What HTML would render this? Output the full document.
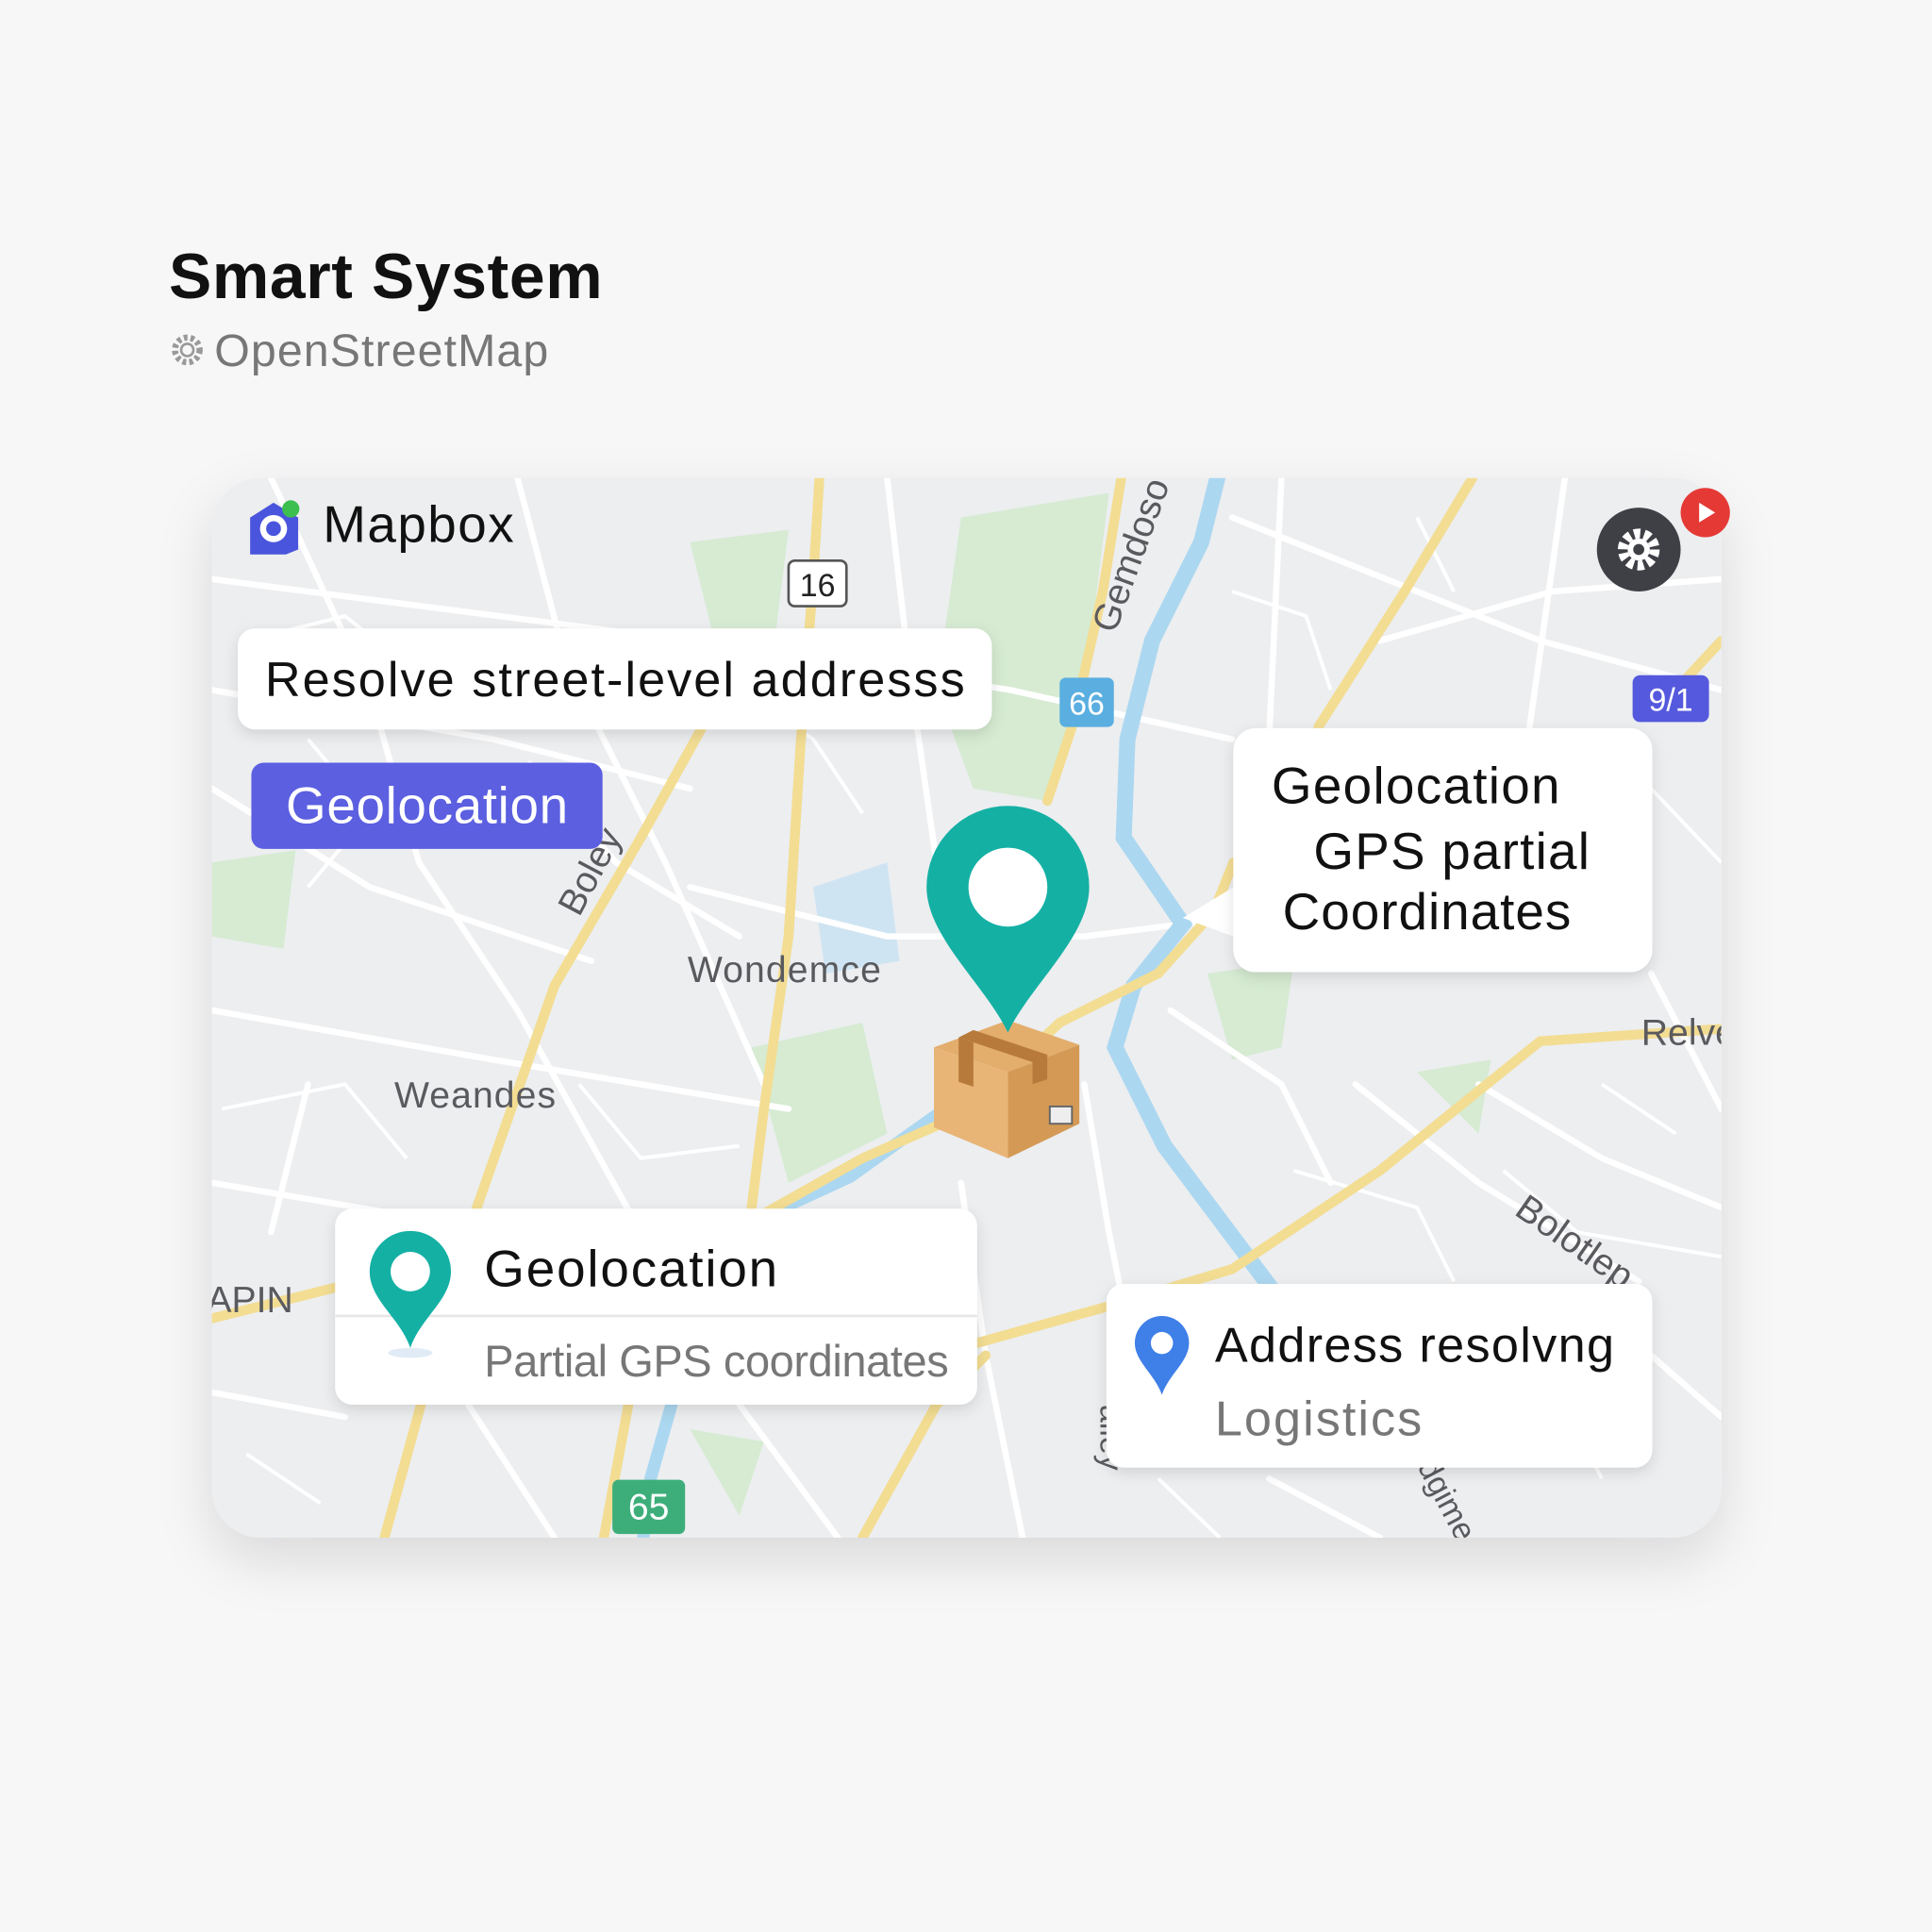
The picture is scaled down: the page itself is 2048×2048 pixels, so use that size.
<!DOCTYPE html>
<html><head><meta charset="utf-8"><style>
html,body{margin:0;padding:0;background:#f7f7f8;}
svg{display:block;}
text{font-family:"Liberation Sans",sans-serif;}
</style></head><body>
<svg width="2048" height="2048" viewBox="0 0 1568 1568" xmlns="http://www.w3.org/2000/svg">
<defs>
<clipPath id="mc"><rect x="172" y="388" width="1225" height="860" rx="40"/></clipPath>
<filter id="sh" x="-20%" y="-20%" width="140%" height="150%"><feDropShadow dx="0" dy="18" stdDeviation="22" flood-color="#000" flood-opacity="0.12"/></filter>
<filter id="cs" x="-10%" y="-20%" width="120%" height="150%"><feDropShadow dx="0" dy="4" stdDeviation="6" flood-color="#000" flood-opacity="0.12"/></filter>
</defs>
<rect width="1568" height="1568" fill="#f7f7f8"/>
<text x="137" y="242" font-size="52" font-weight="bold" fill="#111" textLength="352">Smart System</text>
<circle cx="152" cy="284" r="10" fill="none" stroke="#999" stroke-width="5" stroke-dasharray="3 2.5"/>
<circle cx="152" cy="284" r="5" fill="#f7f7f8" stroke="#999" stroke-width="2"/>
<text x="174" y="297" font-size="37" fill="#777" textLength="271">OpenStreetMap</text>

<rect x="172" y="388" width="1225" height="860" rx="40" fill="#eceef0" filter="url(#sh)"/>
<g clip-path="url(#mc)">
<rect x="172" y="388" width="1225" height="860" fill="#eceef0"/>
<g fill="#d6ebd2">
<path d="M780 420 L900 400 L880 560 L850 650 L790 640 L760 560 Z"/>
<path d="M560 440 L640 430 L630 510 L580 520 Z"/>
<path d="M610 850 L700 830 L720 920 L640 960 Z"/>
<path d="M980 790 L1050 780 L1040 850 L1000 860 Z"/>
<path d="M1150 870 L1210 860 L1200 920 Z"/>
<path d="M172 700 L240 690 L230 770 L172 760 Z"/>
<path d="M560 1160 L620 1170 L600 1230 Z"/>
</g>
<path d="M660 720 L720 700 L730 780 L670 790 Z" fill="#cfe4f2"/>
<g stroke="#fff" stroke-width="5" fill="none" stroke-linecap="round">
<path d="M172 470 L560 520 L820 560 L1000 600"/><path d="M172 560 L400 600 L560 640"/>
<path d="M172 820 L400 860 L640 900"/><path d="M172 960 L350 990 L560 1000"/>
<path d="M220 388 L300 560 L340 700 L420 820 L520 1000"/><path d="M420 388 L460 540 L540 700 L620 880"/>
<path d="M720 388 L740 560 L760 700"/><path d="M172 640 L300 720 L480 780"/>
<path d="M560 720 L720 760 L880 760 L1000 745"/><path d="M1000 420 L1100 460 L1250 520 L1397 560"/>
<path d="M1040 388 L1030 600"/><path d="M1270 388 L1240 600"/><path d="M1397 470 L1260 480 L1120 520"/>
<path d="M1340 790 L1397 900"/><path d="M1100 880 L1200 960 L1330 1040"/><path d="M1200 880 L1300 940 L1397 980"/>
<path d="M880 880 L900 1000 L920 1100"/><path d="M780 960 L800 1100 L830 1248"/>
<path d="M600 1140 L680 1248"/><path d="M172 1130 L280 1150"/><path d="M380 1140 L450 1248"/>
<path d="M1030 1200 L1120 1248"/><path d="M1340 1100 L1397 1150"/><path d="M950 820 L1040 880 L1080 960"/>
<path d="M430 620 L500 700 L600 760"/><path d="M250 880 L220 1000"/>
</g>
<g stroke="#fff" stroke-width="3" fill="none">
<path d="M200 520 L280 500 L330 540"/><path d="M250 600 L300 660 L250 720"/><path d="M180 900 L280 880 L330 940"/>
<path d="M470 880 L520 940 L600 930"/><path d="M1120 620 L1180 690"/><path d="M1340 640 L1397 700"/>
<path d="M1220 950 L1280 1000 L1397 1020"/><path d="M1050 950 L1150 980 L1180 1040"/><path d="M940 1200 L990 1248"/>
<path d="M1300 880 L1360 920"/><path d="M700 1000 L760 1080"/><path d="M600 560 L660 600 L700 660"/>
<path d="M1100 720 L1200 740 L1300 760"/><path d="M1000 480 L1060 500 L1080 560"/><path d="M1150 420 L1180 480"/>
<path d="M1200 600 L1260 640 L1300 700"/><path d="M1250 1100 L1300 1200"/><path d="M200 1180 L260 1220"/>
</g>
<g stroke="#acd7f0" fill="none" stroke-linecap="round">
<path d="M988 388 L975 440 L935 520 L915 600 L912 680 L960 750 L920 800 L905 850 L945 930 L990 990 L1035 1050" stroke-width="13"/>
<path d="M640 978 L690 955 L760 905" stroke-width="10"/>
<path d="M545 1140 L528 1200 L522 1248" stroke-width="10"/>
</g>
<g stroke="#f3dd93" fill="none" stroke-linecap="round" stroke-width="8">
<path d="M312 1248 L380 1000 L450 800 L520 680 L570 590"/>
<path d="M665 388 L660 470 L650 600 L640 760 L620 900 L610 980"/>
<path d="M910 388 L895 480 L870 590 L850 650"/>
<path d="M1195 388 L1140 480 L1070 590"/>
<path d="M620 985 L700 940 L780 905 L860 830 L940 790 L985 740 L1001 700"/>
<path d="M172 1070 L272 1045"/>
<path d="M793 1090 L900 1060 L1000 1030 L1120 950 L1250 845 L1397 835"/>
<path d="M1397 520 L1360 560"/>
<path d="M510 1140 L490 1248"/>
<path d="M700 1248 L760 1140 L800 1100"/>
</g>
<g fill="#5a5a5e" font-size="30">
<text x="558" y="797" textLength="157">Wondemce</text>
<text x="320" y="899" textLength="131">Weandes</text>
<text x="1332" y="848">Relve</text>
<text x="168" y="1065">APIN</text>
<text transform="translate(470 745) rotate(-62)">Boley</text>
<text transform="translate(905 515) rotate(-70)">Gemdoso</text>
<text transform="translate(1228 985) rotate(35)">Bolotlep</text>
<text transform="translate(893 1140) rotate(90)" font-size="26">alley</text>
<text transform="translate(1150 1190) rotate(62)" font-size="26">dgime</text>
</g>
<rect x="640" y="455" width="47" height="37" rx="5" fill="#fff" stroke="#555" stroke-width="2"/>
<text x="663.5" y="484" font-size="26" text-anchor="middle" fill="#222">16</text>
<rect x="860" y="550" width="44" height="40" rx="5" fill="#5aaee0"/>
<text x="882" y="580" font-size="26" text-anchor="middle" fill="#fff">66</text>
<rect x="1325" y="548" width="62" height="38" rx="6" fill="#5559dd"/>
<text x="1356" y="577" font-size="26" text-anchor="middle" fill="#fff">9/1</text>
<rect x="497" y="1201" width="59" height="44" rx="5" fill="#3dae7a"/>
<text x="526.5" y="1233" font-size="30" text-anchor="middle" fill="#fff">65</text>
<path d="M203 420 L222 408 L242 420 L242 446 L232 450 L203 450 Z" fill="#4a55dd"/>
<circle cx="222" cy="429" r="11" fill="#fff"/><circle cx="222" cy="429" r="6" fill="#4a55dd"/>
<circle cx="236" cy="413" r="7" fill="#3cbf4f"/>
<text x="262" y="440" font-size="42" fill="#111" textLength="155">Mapbox</text>
<circle cx="1330" cy="446" r="34" fill="#3f4046"/>
<circle cx="1330" cy="446" r="13" fill="none" stroke="#fff" stroke-width="8" stroke-dasharray="5 3.2"/>
<circle cx="1330" cy="446" r="9" fill="#fff"/><circle cx="1330" cy="446" r="4.5" fill="#3f4046"/>
<rect x="193" y="510" width="612" height="82" rx="14" fill="#fff" filter="url(#cs)"/>
<text x="215" y="565" font-size="40" fill="#111" textLength="568">Resolve street-level addresss</text>
<rect x="204" y="619" width="285" height="70" rx="10" fill="#5b5fe0"/>
<text x="232" y="668" font-size="42" fill="#fff" textLength="229">Geolocation</text>
<path d="M1001 720 L960 745 L1001 760 Z" fill="#fff"/>
<rect x="1001" y="591" width="340" height="198" rx="18" fill="#fff" filter="url(#cs)"/>
<g font-size="42" fill="#111"><text x="1032" y="652" textLength="234">Geolocation</text><text x="1066" y="705" textLength="224">GPS  partial</text><text x="1041" y="754" textLength="234">Coordinates</text></g>
<path d="M758 850 L818 828 L876 848 L818 870 Z" fill="#e3ad6c"/>
<path d="M758 850 L818 870 L818 940 L758 915 Z" fill="#e8b577"/>
<path d="M818 870 L876 848 L876 912 L818 940 Z" fill="#d49a55"/>
<path d="M778 842 L838 862 L838 880 L850 876 L850 856 L790 836 Z" fill="#b77a3a"/>
<path d="M778 842 L790 846 L790 882 L778 878 Z" fill="#b77a3a"/>
<rect x="852" y="898" width="18" height="14" fill="#eee" stroke="#666" stroke-width="1.5"/>
<path d="M818 838 C800 800 752 760 752 720 A66 66 0 0 1 884 720 C884 760 836 800 818 838 Z" fill="#14b0a4"/>
<circle cx="818" cy="720" r="32" fill="#fff"/>
<rect x="272" y="981" width="521" height="159" rx="14" fill="#fff" filter="url(#cs)"/>
<line x1="272" y1="1068" x2="793" y2="1068" stroke="#e6e6e6" stroke-width="2"/>
<ellipse cx="333" cy="1098" rx="18" ry="4" fill="#cde" opacity="0.6"/>
<path d="M333 1094 C325 1070 300 1055 300 1032 A33 33 0 0 1 366 1032 C366 1055 341 1070 333 1094 Z" fill="#14b0a4"/>
<circle cx="333" cy="1032" r="16" fill="#fff"/>
<text x="393" y="1044" font-size="42" fill="#111" textLength="238">Geolocation</text>
<text x="393" y="1117" font-size="36" fill="#777" textLength="377">Partial GPS coordinates</text>
<rect x="898" y="1042" width="443" height="149" rx="14" fill="#fff" filter="url(#cs)"/>
<path d="M943 1132 C937 1115 921 1105 921 1090 A22 22 0 0 1 965 1090 C965 1105 949 1115 943 1132 Z" fill="#3f7fe8"/>
<circle cx="943" cy="1090" r="9" fill="#fff"/>
<text x="986" y="1105" font-size="40" fill="#111" textLength="324">Address resolvng</text>
<text x="986" y="1165" font-size="40" fill="#777" textLength="168">Logistics</text>
</g>
<circle cx="1384" cy="416" r="20" fill="#e53935"/>
<path d="M1379 408 L1392 416 L1379 424 Z" fill="#fff"/>
</svg>
</body></html>
